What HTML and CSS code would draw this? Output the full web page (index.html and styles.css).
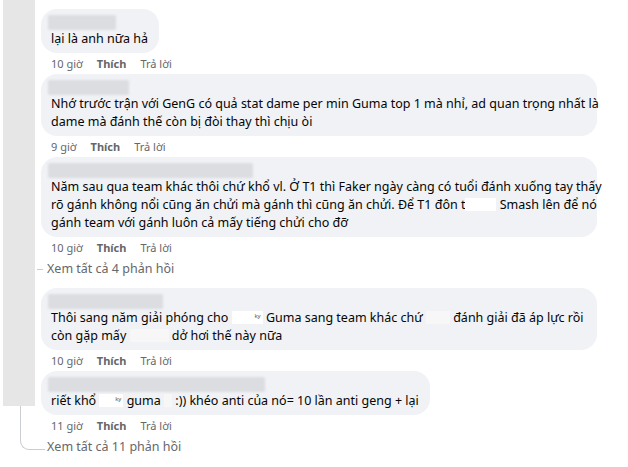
FILE: index.html
```html
<!DOCTYPE html>
<html lang="vi">
<head>
  <meta charset="UTF-8">
  <title>Bình luận</title>
  <link rel="stylesheet" href="styles.css">
</head>
<body>
  <div class="thread">
    <div class="rail">
      <div class="rail-bar"></div>
      <div class="rail-elbow"></div>
    </div>

    <div class="comments">
      <div class="bubble">
        <div class="name name-1"></div>
        <p>lại là anh nữa hả</p>
      </div>
      <div class="meta"><span>10 giờ</span><b>Thích</b><span>Trả lời</span></div>

      <div class="bubble full">
        <div class="name name-2"></div>
        <p>Nhớ trước trận với GenG có quả stat dame per min Guma top 1 mà nhỉ, ad quan trọng nhất là<br>dame mà đánh thế còn bị đòi thay thì chịu òi</p>
      </div>
      <div class="meta"><span>9 giờ</span><b>Thích</b><span>Trả lời</span></div>

      <div class="bubble full">
        <div class="name name-3"></div>
        <p>Năm sau qua team khác thôi chứ khổ vl. Ở T1 thì Faker ngày càng có tuổi đánh xuống tay thấy<br>rõ gánh không nổi cũng ăn chửi mà gánh thì cũng ăn chửi. Để T1 đôn t<span class="hide w30"></span> Smash lên để nó<br>gánh team với gánh luôn cả mấy tiếng chửi cho đỡ</p>
      </div>
      <div class="meta"><span>10 giờ</span><b>Thích</b><span>Trả lời</span></div>
      <div class="more dash">Xem tất cả 4 phản hồi</div>

      <div class="bubble full">
        <div class="name name-4"></div>
        <p>Thôi sang năm giải phóng cho <span class="hide w30"><i>ky</i></span> Guma sang team khác chứ <span class="hide grey w24"></span> đánh giải đã áp lực rồi<br>còn gặp mấy <span class="hide grey w38"></span> dở hơi thế này nữa</p>
      </div>
      <div class="meta"><span>10 giờ</span><b>Thích</b><span>Trả lời</span></div>

      <div class="bubble">
        <div class="name name-5"></div>
        <p>riết khổ <span class="hide w24"><i>ky</i></span> guma <span class="hide grey w8"></span> :)) khéo anti của nó= 10 lần anti geng + lại</p>
      </div>
      <div class="meta"><span>11 giờ</span><b>Thích</b><span>Trả lời</span></div>
      <div class="more">Xem tất cả 11 phản hồi</div>
    </div>
  </div>
</body>
</html>
```

FILE: styles.css
```css
* {
  margin: 0;
  padding: 0;
  box-sizing: border-box;
}

body {
  background: #fff;
  font-family: "Noto Sans", "Open Sans", sans-serif;
  color: #050505;
}

.thread {
  display: grid;
  grid-template-columns: 41px 1fr;
}

.rail {
  padding-left: 3px;
}

.rail-bar {
  width: 32px;
  height: 406px;
  background: #e6e6e6;
}

.rail-elbow {
  margin-left: 17px;
  width: 25px;
  height: 44px;
  border-left: 1px solid #c9ccd1;
  border-bottom: 1px solid #c9ccd1;
  border-bottom-left-radius: 9px;
}

.comments {
  padding-top: 9px;
}

.bubble {
  width: fit-content;
  background: #f0f2f5;
  border-radius: 16px;
  padding: 6px 11px 5px 10px;
}

.bubble.full {
  width: 556px;
}

.bubble p {
  font-size: 12.5px;
  line-height: 18px;
  white-space: nowrap;
}

.name {
  height: 15px;
  margin-left: -3px;
  background: #dcdde1;
  filter: blur(1.2px);
  border-radius: 2px;
}

.name-1 { width: 68px; }
.name-2 { width: 81px; }
.name-3 { width: 205px; }
.name-4 { width: 115px; }
.name-5 { width: 217px; }

.hide {
  display: inline-block;
  height: 13px;
  vertical-align: -2px;
  background: #fff;
  position: relative;
}

.hide i {
  position: absolute;
  right: 2px;
  bottom: -1px;
  font-size: 6px;
  font-style: normal;
  color: #555;
}

.hide.grey {
  background: #f7f7f8;
}

.w8 { width: 8px; }
.w24 { width: 24px; }
.w30 { width: 31px; }
.w38 { width: 39px; }

.meta {
  display: flex;
  gap: 14px;
  height: 21px;
  align-items: center;
  padding-left: 10px;
  font-size: 11px;
  color: #65676b;
}

.meta b {
  font-weight: 700;
}

.more {
  height: 22px;
  line-height: 22px;
  padding-left: 6px;
  margin-bottom: 8px;
  font-size: 12.5px;
  color: #65676b;
  position: relative;
}

.more.dash::before {
  content: "";
  position: absolute;
  left: -4px;
  top: 11px;
  width: 6px;
  border-top: 1px solid #c9ccd1;
}
```
